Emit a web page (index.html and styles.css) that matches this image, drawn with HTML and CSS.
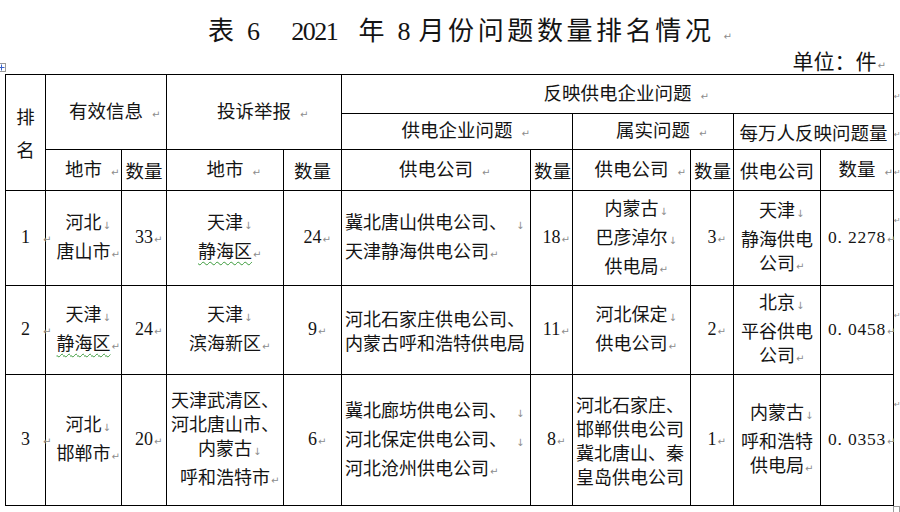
FILE: index.html
```html
<!DOCTYPE html>
<html lang="zh-CN">
<head>
<meta charset="utf-8">
<title>表6 2021年8月份问题数量排名情况</title>
<link rel="stylesheet" href="styles.css">
</head>
<body>
<div class="page">
  <div class="move-handle"><svg width="7" height="7" viewBox="0 0 7 7"><path d="M3.5 0.5V6.5M0.5 3.5H6.5" stroke="#3a62c9" stroke-width="1"/></svg></div>
  <h1 class="title">表 <span class="num">6</span>　<span class="num year">2021</span> 年 <span class="num">8</span> 月份问题数量排名情况<span class="pm sp">↵</span></h1>
  <p class="unit">单位：件<span class="um">↵</span></p>
  <table class="grid">
    <colgroup>
      <col class="w40"><col class="w76"><col class="w45"><col class="w117"><col class="w58"><col class="w189"><col class="w42"><col class="w118"><col class="w43"><col class="w87"><col class="w73"><col class="w7">
    </colgroup>
    <tr class="h1">
      <th rowspan="3" class="rank-h">排<br>名</th>
      <th colspan="2" rowspan="2">有效信息<span class="pm sp">↵</span></th>
      <th colspan="2" rowspan="2">投诉举报<span class="pm sp">↵</span></th>
      <th colspan="6">反映供电企业问题<span class="pm sp">↵</span></th>
      <td class="eor mid"><span class="em">↵</span></td>
    </tr>
    <tr class="h2">
      <th colspan="2">供电企业问题<span class="pm sp">↵</span></th>
      <th colspan="2">属实问题<span class="pm sp">↵</span></th>
      <th colspan="2">每万人反映问题量</th>
      <td class="eor mid"><span class="em">↵</span></td>
    </tr>
    <tr class="h3">
      <th>地市<span class="pm sp">↵</span></th>
      <th>数量</th>
      <th>地市<span class="pm sp">↵</span></th>
      <th>数量</th>
      <th>供电公司<span class="pm sp">↵</span></th>
      <th>数量</th>
      <th>供电公司<span class="pm sp">↵</span></th>
      <th>数量</th>
      <th>供电公司</th>
      <th>数量<span class="pm sp">↵</span></th>
      <td class="eor mid"><span class="em">↵</span></td>
    </tr>
    <tr class="r1">
      <td class="n">1<span class="pm gap">↵</span></td>
      <td>河北<span class="pm">↓</span><br>唐山市<span class="pm">↵</span></td>
      <td class="n">33<span class="pm">↵</span></td>
      <td>天津<span class="pm">↓</span><br><span class="wavy">静海区</span><span class="pm">↵</span></td>
      <td class="n">24<span class="pm">↵</span></td>
      <td class="l">冀北唐山供电公司、<span class="pm sp">↓</span><br>天津静海供电公司<span class="pm">↵</span></td>
      <td class="n">18<span class="pm">↵</span></td>
      <td>内蒙古<span class="pm">↓</span><br>巴彦淖尔<span class="pm">↓</span><br>供电局<span class="pm">↵</span></td>
      <td class="n">3<span class="pm">↵</span></td>
      <td>天津<span class="pm">↓</span><br>静海供电<br>公司<span class="pm">↵</span></td>
      <td class="dec">0. 2278<span class="pm">↵</span></td>
      <td class="eor top"><span class="em">↵</span></td>
    </tr>
    <tr class="r2">
      <td class="n">2<span class="pm gap">↵</span></td>
      <td>天津<span class="pm">↓</span><br><span class="wavy">静海区</span><span class="pm">↵</span></td>
      <td class="n">24<span class="pm">↵</span></td>
      <td>天津<span class="pm">↓</span><br>滨海新区<span class="pm">↵</span></td>
      <td class="n">9<span class="pm">↵</span></td>
      <td class="l">河北石家庄供电公司、<br>内蒙古呼和浩特供电局</td>
      <td class="n">11<span class="pm">↵</span></td>
      <td>河北保定<span class="pm">↓</span><br>供电公司<span class="pm">↵</span></td>
      <td class="n">2<span class="pm">↵</span></td>
      <td>北京<span class="pm">↓</span><br>平谷供电<br>公司<span class="pm">↵</span></td>
      <td class="dec">0. 0458<span class="pm">↵</span></td>
      <td class="eor top"><span class="em">↵</span></td>
    </tr>
    <tr class="r3">
      <td class="n">3<span class="pm gap">↵</span></td>
      <td>河北<span class="pm">↓</span><br>邯郸市<span class="pm">↵</span></td>
      <td class="n">20<span class="pm">↵</span></td>
      <td>天津武清区、<br>河北唐山市、<br>内蒙古<span class="pm">↓</span><br>呼和浩特市<span class="pm">↵</span></td>
      <td class="n">6<span class="pm">↵</span></td>
      <td class="l">冀北廊坊供电公司、<span class="pm sp">↓</span><br>河北保定供电公司、<span class="pm sp">↓</span><br>河北沧州供电公司<span class="pm">↵</span></td>
      <td class="n">8<span class="pm">↵</span></td>
      <td class="l">河北石家庄、<br>邯郸供电公司<br>冀北唐山、秦<br>皇岛供电公司</td>
      <td class="n">1<span class="pm">↵</span></td>
      <td>内蒙古<span class="pm">↓</span><br>呼和浩特<br>供电局<span class="pm">↵</span></td>
      <td class="dec">0. 0353<span class="pm">↵</span></td>
      <td class="eor top"><span class="em">↵</span></td>
    </tr>
  </table>
  <div class="size-handle"></div>
</div>
</body>
</html>
```

FILE: styles.css
```css
html, body {
  margin: 0;
  padding: 0;
  background: #ffffff;
}
body {
  font-family: "Noto Sans CJK SC", "Noto Sans CJK JP", sans-serif;
  color: #141414;
}
.page {
  position: relative;
  width: 900px;
  height: 512px;
  overflow: hidden;
}
.title {
  margin: 0;
  padding: 11px 0 0 208px;
  height: 36px;
  font-size: 26px;
  font-weight: 400;
  line-height: 36px;
  letter-spacing: 3.6px;
  white-space: nowrap;
}
.title .num {
  font-family: "Liberation Serif", serif;
  font-size: 26px;
  letter-spacing: -1.5px;
}
.title .year {
  margin-left: 3px;
  margin-right: 12px;
}
.unit {
  margin: 0;
  height: 27px;
  line-height: 27px;
  font-size: 21px;
  text-align: right;
  padding-right: 14px;
  white-space: nowrap;
}
.um {
  font-family: "DejaVu Sans", sans-serif;
  font-size: 10px;
  color: #8c8c8c;
  margin-left: 1px;
}
.grid {
  margin-left: 5px;
  border-collapse: collapse;
  table-layout: fixed;
  width: 895px;
}
.w40 { width: 40px; }
.w76 { width: 76px; }
.w45 { width: 45px; }
.w117 { width: 117px; }
.w58 { width: 58px; }
.w189 { width: 189px; }
.w42 { width: 42px; }
.w118 { width: 118px; }
.w43 { width: 43px; }
.w87 { width: 87px; }
.w73 { width: 73px; }
.w7 { width: 7px; }
.h1 { height: 39px; }
.h2 { height: 36px; }
.h3 { height: 41px; }
.r1 { height: 95px; }
.r2 { height: 89px; }
.r3 { height: 131px; }
.grid th, .grid td {
  border: 1px solid #000;
  padding: 0 3px;
  font-size: 18px;
  line-height: 24px;
  font-weight: 400;
  text-align: center;
  vertical-align: middle;
  white-space: nowrap;
  overflow: visible;
}
.grid th {
  font-size: 18.5px;
}
.grid th.rank-h {
  line-height: 33px;
}
.grid td.l {
  text-align: left;
}
.grid td.n {
  font-family: "Liberation Serif", serif;
  font-size: 18px;
}
.grid td.dec {
  font-family: "Liberation Serif", serif;
  font-size: 17.5px;
  letter-spacing: 0.8px;
  padding: 0 1px;
}
.grid td.eor {
  border: none;
  padding: 0;
  text-align: left;
}
.grid td.eor.top {
  vertical-align: top;
  padding-top: 12px;
}
.pm {
  font-family: "DejaVu Sans", sans-serif;
  font-size: 10px;
  font-weight: 400;
  letter-spacing: 0;
  color: #8c8c8c;
  margin-left: 0.1em;
  margin-right: -0.94em;
}
.pm.sp {
  margin-left: 0.9em;
  margin-right: -1.74em;
}
.pm.gap {
  margin-left: 1.3em;
  margin-right: -2.14em;
}
.em {
  font-family: "DejaVu Sans", sans-serif;
  font-size: 8px;
  color: #8c8c8c;
}
.wavy {
  text-decoration: underline wavy #3a9a3a;
  text-decoration-thickness: 1px;
  text-underline-offset: 3px;
}
.move-handle {
  position: absolute;
  left: -3px;
  top: 63px;
  width: 7px;
  height: 7px;
  border: 1px solid #9a9a9a;
  background: #fff;
  display: flex;
}
.size-handle {
  position: absolute;
  left: 893px;
  top: 506px;
  width: 5px;
  height: 5px;
  border: 1px solid #9a9a9a;
  background: #fff;
}
```
